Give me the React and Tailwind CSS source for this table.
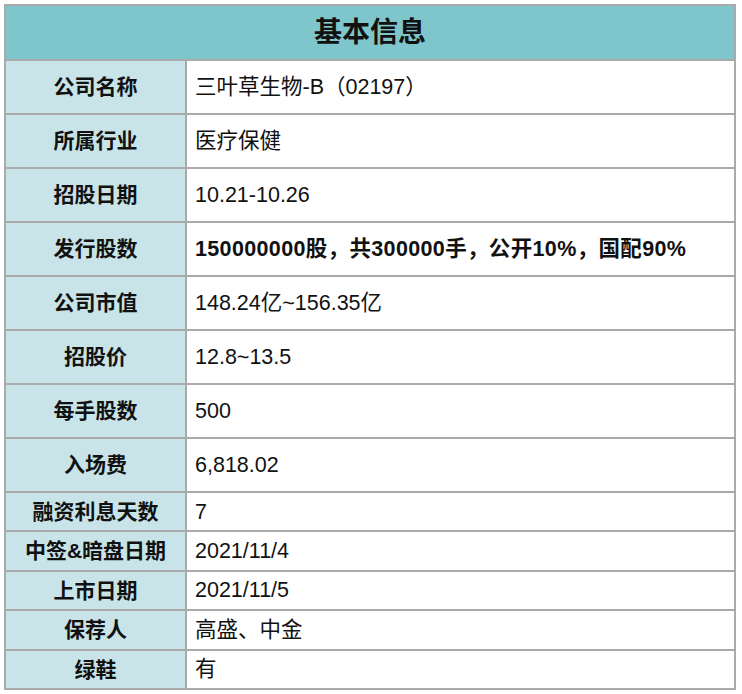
import React from "react";

const rows = [
  ["公司名称", "三叶草生物-B（02197）", false, true],
  ["所属行业", "医疗保健", false, true],
  ["招股日期", "10.21-10.26", false, true],
  ["发行股数", "150000000股，共300000手，公开10%，国配90%", true, true],
  ["公司市值", "148.24亿~156.35亿", false, true],
  ["招股价", "12.8~13.5", false, true],
  ["每手股数", "500", false, true],
  ["入场费", "6,818.02", false, true],
  ["融资利息天数", "7", false, false],
  ["中签&暗盘日期", "2021/11/4", false, false],
  ["上市日期", "2021/11/5", false, false],
  ["保荐人", "高盛、中金", false, false],
  ["绿鞋", "有", false, false],
];

export default function App() {
  return (
    <div
      className="w-[742px] h-[694px] bg-white pt-1 pl-1"
      style={{ fontFamily: '"Liberation Sans", "Noto Sans CJK SC", sans-serif' }}
    >
      <div className="w-[732px] border-2 border-[#aaaaaa] text-[#111111]">
        <div className="h-[53px] bg-[#7ec6cb] flex items-center justify-center text-[28px] font-bold">
          基本信息
        </div>
        {rows.map(([k, v, bold, tall]) => (
          <div
            key={k}
            className={
              "flex border-t-2 border-[#aaaaaa] " + (tall ? "h-[54px]" : "h-[39.4px]")
            }
          >
            <div className="w-[179px] shrink-0 bg-[#c8e4e8] flex items-center justify-center text-[21px] font-bold">
              {k}
            </div>
            <div
              className={
                "flex-1 border-l-2 border-[#aaaaaa] flex items-center pl-2 text-[21.5px] " +
                (bold ? "font-bold tracking-[0.35px]" : "font-normal")
              }
            >
              {v}
            </div>
          </div>
        ))}
      </div>
    </div>
  );
}
